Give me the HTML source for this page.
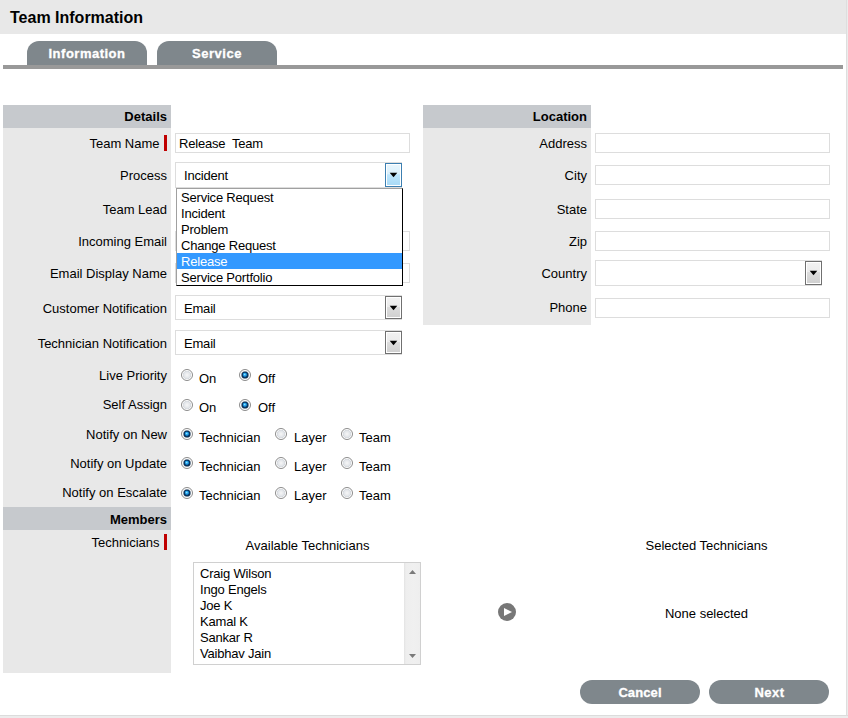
<!DOCTYPE html>
<html><head><meta charset="utf-8"><style>
html,body{margin:0;padding:0;width:848px;height:718px;overflow:hidden;background:#fff;}
body{position:relative;font-family:"Liberation Sans",sans-serif;}
body>div{position:absolute;box-sizing:border-box;}
.inp{background:#fff;border:1px solid #dddddd;}
.btn{background:linear-gradient(#f2f2f2 0%,#ebebeb 46%,#dddddd 47%,#cfcfcf 100%);border:1px solid #707070;box-shadow:inset 0 0 0 1px #fff;}
.btnh{background:linear-gradient(#eaf6fd 0%,#d9f0fc 47%,#bee6fd 48%,#a7d9f5 100%);border:1px solid #3c7fb1;box-shadow:inset 0 0 0 1px #fff;}
.arr{width:0;height:0;border-left:3.5px solid transparent;border-right:3.5px solid transparent;border-top:4.5px solid #000;}
.rad{border-radius:50%;border:1px solid #8e8f8f;background:radial-gradient(circle at 50% 50%,#f6f6f6 0%,#dfe3e8 60%,#fff 72%);}
.dot{border-radius:50%;background:radial-gradient(circle at 40% 35%,#b7eaff 0%,#2ea4e8 35%,#1a7ccc 60%,#0a3d6e 85%,#062a50 100%);}
.pill{background:#7f878c;border-radius:12px;}
</style></head><body>
<div style="left:846px;top:0px;width:2px;height:718px;background:linear-gradient(to right,#dedede 0,#dedede 1px,#ececec 1px);"></div>
<div style="left:0px;top:715px;width:848px;height:3px;background:linear-gradient(#dcdcdc 0,#dcdcdc 1px,#ececec 1px);"></div>
<div style="left:0px;top:0px;width:846px;height:34px;background:#e8e8e8;"></div>
<div style="top:8.46px;font-size:16px;line-height:20px;font-weight:700;color:#000;white-space:pre;left:10px;">Team Information</div>
<div style="left:27px;top:41px;width:120px;height:24px;background:#7f878c;border-radius:12px 12px 0 0;"></div>
<div style="left:157px;top:41px;width:120px;height:24px;background:#7f878c;border-radius:12px 12px 0 0;"></div>
<div style="top:45.50px;font-size:13px;line-height:16px;font-weight:700;color:#fff;white-space:pre;letter-spacing:0.5px;-webkit-text-stroke:0.3px #fff;left:-113px;width:400px;text-align:center;">Information</div>
<div style="top:45.50px;font-size:13px;line-height:16px;font-weight:700;color:#fff;white-space:pre;letter-spacing:0.5px;-webkit-text-stroke:0.3px #fff;left:17px;width:400px;text-align:center;">Service</div>
<div style="left:3px;top:65px;width:840px;height:4px;background:#999;"></div>
<div style="left:3px;top:105px;width:168px;height:23px;background:#c6c9cd;"></div>
<div style="top:108.50px;font-size:13px;line-height:16px;font-weight:700;color:#000;white-space:pre;right:681px;">Details</div>
<div style="left:3px;top:128px;width:168px;height:379px;background:#e8e8e8;"></div>
<div style="left:3px;top:507px;width:168px;height:23px;background:#c6c9cd;"></div>
<div style="top:511.50px;font-size:13px;line-height:16px;font-weight:700;color:#000;white-space:pre;right:681px;">Members</div>
<div style="left:3px;top:530px;width:168px;height:143px;background:#e8e8e8;"></div>
<div style="left:423px;top:105px;width:168px;height:23px;background:#c6c9cd;"></div>
<div style="top:108.50px;font-size:13px;line-height:16px;font-weight:700;color:#000;white-space:pre;right:261px;">Location</div>
<div style="left:423px;top:128px;width:168px;height:197px;background:#e8e8e8;"></div>
<div style="top:135.50px;font-size:13px;line-height:16px;font-weight:400;color:#000;white-space:pre;right:688.5px;">Team Name</div>
<div style="left:164px;top:135px;width:3px;height:16px;background:#c00000;"></div>
<div style="top:167.50px;font-size:13px;line-height:16px;font-weight:400;color:#000;white-space:pre;right:681px;">Process</div>
<div style="top:201.50px;font-size:13px;line-height:16px;font-weight:400;color:#000;white-space:pre;right:681px;">Team Lead</div>
<div style="top:233.50px;font-size:13px;line-height:16px;font-weight:400;color:#000;white-space:pre;right:681px;">Incoming Email</div>
<div style="top:265.50px;font-size:13px;line-height:16px;font-weight:400;color:#000;white-space:pre;right:681px;">Email Display Name</div>
<div style="top:300.50px;font-size:13px;line-height:16px;font-weight:400;color:#000;white-space:pre;right:681px;">Customer Notification</div>
<div style="top:335.50px;font-size:13px;line-height:16px;font-weight:400;color:#000;white-space:pre;right:681px;">Technician Notification</div>
<div style="top:367.50px;font-size:13px;line-height:16px;font-weight:400;color:#000;white-space:pre;right:681px;">Live Priority</div>
<div style="top:396.50px;font-size:13px;line-height:16px;font-weight:400;color:#000;white-space:pre;right:681px;">Self Assign</div>
<div style="top:426.50px;font-size:13px;line-height:16px;font-weight:400;color:#000;white-space:pre;right:681px;">Notify on New</div>
<div style="top:455.50px;font-size:13px;line-height:16px;font-weight:400;color:#000;white-space:pre;right:681px;">Notify on Update</div>
<div style="top:484.50px;font-size:13px;line-height:16px;font-weight:400;color:#000;white-space:pre;right:681px;">Notify on Escalate</div>
<div style="top:534.50px;font-size:13px;line-height:16px;font-weight:400;color:#000;white-space:pre;right:688.5px;">Technicians</div>
<div style="left:164px;top:534px;width:3px;height:16px;background:#c00000;"></div>
<div class="inp" style="left:175px;top:133px;width:235px;height:20px;"></div>
<div style="top:135.50px;font-size:13px;line-height:16px;font-weight:400;color:#000;white-space:pre;letter-spacing:-0.2px;left:179px;">Release  Team</div>
<div class="inp" style="left:175px;top:162px;width:227px;height:26px;"></div>
<div class="btnh" style="left:385px;top:163px;width:17px;height:24px;"></div>
<svg style="position:absolute;left:389px;top:172px;" width="9" height="6" viewBox="0 0 9 6"><polygon points="0.7,0.8 8.3,0.8 4.5,5.2" fill="#000"/></svg>
<div style="top:167.50px;font-size:13px;line-height:16px;font-weight:400;color:#000;white-space:pre;letter-spacing:-0.2px;left:184px;">Incident</div>
<div class="inp" style="left:175px;top:231px;width:235px;height:20px;"></div>
<div class="inp" style="left:175px;top:263px;width:235px;height:20px;"></div>
<div class="inp" style="left:175px;top:295px;width:227px;height:25px;"></div>
<div class="btn" style="left:385px;top:296px;width:17px;height:23px;"></div>
<svg style="position:absolute;left:389px;top:305px;" width="9" height="6" viewBox="0 0 9 6"><polygon points="0.7,0.8 8.3,0.8 4.5,5.2" fill="#000"/></svg>
<div style="top:300.50px;font-size:13px;line-height:16px;font-weight:400;color:#000;white-space:pre;letter-spacing:-0.2px;left:184px;">Email</div>
<div class="inp" style="left:175px;top:330px;width:227px;height:25px;"></div>
<div class="btn" style="left:385px;top:331px;width:17px;height:23px;"></div>
<svg style="position:absolute;left:389px;top:340px;" width="9" height="6" viewBox="0 0 9 6"><polygon points="0.7,0.8 8.3,0.8 4.5,5.2" fill="#000"/></svg>
<div style="top:335.50px;font-size:13px;line-height:16px;font-weight:400;color:#000;white-space:pre;letter-spacing:-0.2px;left:184px;">Email</div>
<svg style="position:absolute;left:181px;top:369px;" width="12" height="12" viewBox="0 0 12 12"><circle cx="6" cy="6" r="5.5" fill="url(#gr)" stroke="#8b8b8b" stroke-width="1"/></svg>
<div style="top:370.50px;font-size:13px;line-height:16px;font-weight:400;color:#000;white-space:pre;left:199px;">On</div>
<svg style="position:absolute;left:239px;top:369px;" width="12" height="12" viewBox="0 0 12 12"><circle cx="6" cy="6" r="5.5" fill="url(#gr)" stroke="#8b8b8b" stroke-width="1"/><circle cx="6" cy="6" r="3.5" fill="url(#gd)"/></svg>
<div style="top:370.50px;font-size:13px;line-height:16px;font-weight:400;color:#000;white-space:pre;left:258px;">Off</div>
<svg style="position:absolute;left:181px;top:399px;" width="12" height="12" viewBox="0 0 12 12"><circle cx="6" cy="6" r="5.5" fill="url(#gr)" stroke="#8b8b8b" stroke-width="1"/></svg>
<div style="top:399.50px;font-size:13px;line-height:16px;font-weight:400;color:#000;white-space:pre;left:199px;">On</div>
<svg style="position:absolute;left:239px;top:399px;" width="12" height="12" viewBox="0 0 12 12"><circle cx="6" cy="6" r="5.5" fill="url(#gr)" stroke="#8b8b8b" stroke-width="1"/><circle cx="6" cy="6" r="3.5" fill="url(#gd)"/></svg>
<div style="top:399.50px;font-size:13px;line-height:16px;font-weight:400;color:#000;white-space:pre;left:258px;">Off</div>
<svg style="position:absolute;left:181px;top:428px;" width="12" height="12" viewBox="0 0 12 12"><circle cx="6" cy="6" r="5.5" fill="url(#gr)" stroke="#8b8b8b" stroke-width="1"/><circle cx="6" cy="6" r="3.5" fill="url(#gd)"/></svg>
<div style="top:429.50px;font-size:13px;line-height:16px;font-weight:400;color:#000;white-space:pre;left:199px;">Technician</div>
<svg style="position:absolute;left:275px;top:428px;" width="12" height="12" viewBox="0 0 12 12"><circle cx="6" cy="6" r="5.5" fill="url(#gr)" stroke="#8b8b8b" stroke-width="1"/></svg>
<div style="top:429.50px;font-size:13px;line-height:16px;font-weight:400;color:#000;white-space:pre;left:294px;">Layer</div>
<svg style="position:absolute;left:341px;top:428px;" width="12" height="12" viewBox="0 0 12 12"><circle cx="6" cy="6" r="5.5" fill="url(#gr)" stroke="#8b8b8b" stroke-width="1"/></svg>
<div style="top:429.50px;font-size:13px;line-height:16px;font-weight:400;color:#000;white-space:pre;left:359px;">Team</div>
<svg style="position:absolute;left:181px;top:457px;" width="12" height="12" viewBox="0 0 12 12"><circle cx="6" cy="6" r="5.5" fill="url(#gr)" stroke="#8b8b8b" stroke-width="1"/><circle cx="6" cy="6" r="3.5" fill="url(#gd)"/></svg>
<div style="top:458.50px;font-size:13px;line-height:16px;font-weight:400;color:#000;white-space:pre;left:199px;">Technician</div>
<svg style="position:absolute;left:275px;top:457px;" width="12" height="12" viewBox="0 0 12 12"><circle cx="6" cy="6" r="5.5" fill="url(#gr)" stroke="#8b8b8b" stroke-width="1"/></svg>
<div style="top:458.50px;font-size:13px;line-height:16px;font-weight:400;color:#000;white-space:pre;left:294px;">Layer</div>
<svg style="position:absolute;left:341px;top:457px;" width="12" height="12" viewBox="0 0 12 12"><circle cx="6" cy="6" r="5.5" fill="url(#gr)" stroke="#8b8b8b" stroke-width="1"/></svg>
<div style="top:458.50px;font-size:13px;line-height:16px;font-weight:400;color:#000;white-space:pre;left:359px;">Team</div>
<svg style="position:absolute;left:181px;top:487px;" width="12" height="12" viewBox="0 0 12 12"><circle cx="6" cy="6" r="5.5" fill="url(#gr)" stroke="#8b8b8b" stroke-width="1"/><circle cx="6" cy="6" r="3.5" fill="url(#gd)"/></svg>
<div style="top:487.50px;font-size:13px;line-height:16px;font-weight:400;color:#000;white-space:pre;left:199px;">Technician</div>
<svg style="position:absolute;left:275px;top:487px;" width="12" height="12" viewBox="0 0 12 12"><circle cx="6" cy="6" r="5.5" fill="url(#gr)" stroke="#8b8b8b" stroke-width="1"/></svg>
<div style="top:487.50px;font-size:13px;line-height:16px;font-weight:400;color:#000;white-space:pre;left:294px;">Layer</div>
<svg style="position:absolute;left:341px;top:487px;" width="12" height="12" viewBox="0 0 12 12"><circle cx="6" cy="6" r="5.5" fill="url(#gr)" stroke="#8b8b8b" stroke-width="1"/></svg>
<div style="top:487.50px;font-size:13px;line-height:16px;font-weight:400;color:#000;white-space:pre;left:359px;">Team</div>
<div style="top:135.50px;font-size:13px;line-height:16px;font-weight:400;color:#000;white-space:pre;right:261px;">Address</div>
<div style="top:167.50px;font-size:13px;line-height:16px;font-weight:400;color:#000;white-space:pre;right:261px;">City</div>
<div style="top:201.50px;font-size:13px;line-height:16px;font-weight:400;color:#000;white-space:pre;right:261px;">State</div>
<div style="top:233.50px;font-size:13px;line-height:16px;font-weight:400;color:#000;white-space:pre;right:261px;">Zip</div>
<div style="top:265.50px;font-size:13px;line-height:16px;font-weight:400;color:#000;white-space:pre;right:261px;">Country</div>
<div style="top:299.50px;font-size:13px;line-height:16px;font-weight:400;color:#000;white-space:pre;right:261px;">Phone</div>
<div class="inp" style="left:595px;top:133px;width:235px;height:20px;"></div>
<div class="inp" style="left:595px;top:165px;width:235px;height:20px;"></div>
<div class="inp" style="left:595px;top:199px;width:235px;height:20px;"></div>
<div class="inp" style="left:595px;top:231px;width:235px;height:20px;"></div>
<div class="inp" style="left:595px;top:260px;width:227px;height:26px;"></div>
<div class="btn" style="left:805px;top:261px;width:17px;height:24px;"></div>
<svg style="position:absolute;left:809px;top:270px;" width="9" height="6" viewBox="0 0 9 6"><polygon points="0.7,0.8 8.3,0.8 4.5,5.2" fill="#000"/></svg>
<div class="inp" style="left:595px;top:298px;width:235px;height:20px;"></div>
<div style="left:176px;top:188px;width:227px;height:98px;background:#fff;border:1px solid #000;border-top-color:#a0a0a0;border-left-color:#a0a0a0;"></div>
<div style="top:189.50px;font-size:13px;line-height:16px;font-weight:400;color:#000;white-space:pre;letter-spacing:-0.2px;left:181px;">Service Request</div>
<div style="top:205.50px;font-size:13px;line-height:16px;font-weight:400;color:#000;white-space:pre;letter-spacing:-0.2px;left:181px;">Incident</div>
<div style="top:221.50px;font-size:13px;line-height:16px;font-weight:400;color:#000;white-space:pre;letter-spacing:-0.2px;left:181px;">Problem</div>
<div style="top:237.50px;font-size:13px;line-height:16px;font-weight:400;color:#000;white-space:pre;letter-spacing:-0.2px;left:181px;">Change Request</div>
<div style="left:177px;top:253px;width:225px;height:16px;background:#3399ff;"></div>
<div style="top:253.50px;font-size:13px;line-height:16px;font-weight:400;color:#fff;white-space:pre;letter-spacing:-0.2px;left:181px;">Release</div>
<div style="top:269.50px;font-size:13px;line-height:16px;font-weight:400;color:#000;white-space:pre;letter-spacing:-0.2px;left:181px;">Service Portfolio</div>
<div style="top:537.50px;font-size:13px;line-height:16px;font-weight:400;color:#000;white-space:pre;left:107.5px;width:400px;text-align:center;">Available Technicians</div>
<div style="top:537.50px;font-size:13px;line-height:16px;font-weight:400;color:#000;white-space:pre;left:506.5px;width:400px;text-align:center;">Selected Technicians</div>
<div style="left:193px;top:562px;width:228px;height:103px;background:#fff;border:1px solid #d0d0d0;"></div>
<div style="left:404px;top:563px;width:16px;height:101px;background:linear-gradient(to right,#e3e3e3 0,#eeeeee 2px,#f0f0f0 60%,#eeeeee 100%);"></div>
<svg style="position:absolute;left:409px;top:570px;" width="7" height="4" viewBox="0 0 7 4"><polygon points="0,4 7,4 3.5,0" fill="#7a7a7a"/></svg>
<svg style="position:absolute;left:409px;top:654px;" width="7" height="4" viewBox="0 0 7 4"><polygon points="0,0 7,0 3.5,4" fill="#7a7a7a"/></svg>
<div style="top:565.50px;font-size:13px;line-height:16px;font-weight:400;color:#000;white-space:pre;letter-spacing:-0.2px;left:200px;">Craig Wilson</div>
<div style="top:581.50px;font-size:13px;line-height:16px;font-weight:400;color:#000;white-space:pre;letter-spacing:-0.2px;left:200px;">Ingo Engels</div>
<div style="top:597.50px;font-size:13px;line-height:16px;font-weight:400;color:#000;white-space:pre;letter-spacing:-0.2px;left:200px;">Joe K</div>
<div style="top:613.50px;font-size:13px;line-height:16px;font-weight:400;color:#000;white-space:pre;letter-spacing:-0.2px;left:200px;">Kamal K</div>
<div style="top:629.50px;font-size:13px;line-height:16px;font-weight:400;color:#000;white-space:pre;letter-spacing:-0.2px;left:200px;">Sankar R</div>
<div style="top:645.50px;font-size:13px;line-height:16px;font-weight:400;color:#000;white-space:pre;letter-spacing:-0.2px;left:200px;">Vaibhav Jain</div>
<div style="left:498px;top:603px;width:18px;height:18px;border-radius:50%;background:#777;"></div>
<div style="left:504px;top:608px;width:0;height:0;border-top:4.5px solid transparent;border-bottom:4.5px solid transparent;border-left:8px solid #fff;"></div>
<div style="top:605.50px;font-size:13px;line-height:16px;font-weight:400;color:#000;white-space:pre;left:506.5px;width:400px;text-align:center;">None selected</div>
<div style="left:580px;top:680px;width:120px;height:24px;background:#7f878c;border-radius:12px;"></div>
<div style="top:684.50px;font-size:13px;line-height:16px;font-weight:700;color:#fff;white-space:pre;letter-spacing:0.1px;-webkit-text-stroke:0.3px #fff;left:440px;width:400px;text-align:center;">Cancel</div>
<div style="left:709px;top:680px;width:120px;height:24px;background:#7f878c;border-radius:12px;"></div>
<div style="top:684.50px;font-size:13px;line-height:16px;font-weight:700;color:#fff;white-space:pre;letter-spacing:0.5px;-webkit-text-stroke:0.3px #fff;left:569.5px;width:400px;text-align:center;">Next</div>
<svg width="0" height="0" style="position:absolute"><defs>
<radialGradient id="gr" cx="0.5" cy="0.5" r="0.5"><stop offset="0" stop-color="#f7f7f7"/><stop offset="0.55" stop-color="#e2e5e9"/><stop offset="0.7" stop-color="#d5d9de"/><stop offset="0.82" stop-color="#ffffff"/><stop offset="1" stop-color="#ffffff"/></radialGradient>
<radialGradient id="gd" cx="0.5" cy="0.5" r="0.5" fx="0.45" fy="0.4"><stop offset="0" stop-color="#aef0ff"/><stop offset="0.3" stop-color="#2fb0f0"/><stop offset="0.52" stop-color="#1680cc"/><stop offset="0.68" stop-color="#0a3c6a"/><stop offset="1" stop-color="#06284a"/></radialGradient>
</defs></svg>
</body></html>
